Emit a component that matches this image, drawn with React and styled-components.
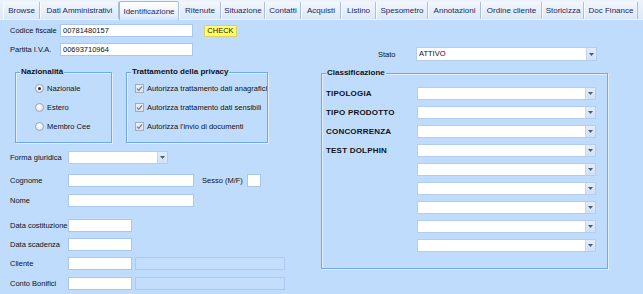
import { createGlobalStyle, styled } from "styled-components";

const tabs = [
  ["Browse", 37],
  ["Dati Amministrativi", 79],
  ["Identificazione", 60, true],
  ["Ritenute", 42],
  ["Situazione", 44],
  ["Contatti", 36],
  ["Acquisti", 40],
  ["Listino", 35],
  ["Spesometro", 52],
  ["Annotazioni", 53],
  ["Ordine cliente", 61],
  ["Storicizza", 42],
  ["Doc Finance", 54],
];

const classi = ["TIPOLOGIA", "TIPO PRODOTTO", "CONCORRENZA", "TEST DOLPHIN", "", "", "", "", ""];

function Arrow() {
  return (
    <ArrowBtn>
      <svg width="5" height="3" viewBox="0 0 5 3">
        <polygon points="0,0 5,0 2.5,3" fill="#4a5b7c" />
      </svg>
    </ArrowBtn>
  );
}

function Combo({ w, h = 13, value }) {
  return (
    <ComboBox $w={w} $h={h}>
      <ComboText>{value}</ComboText>
      <Arrow />
    </ComboBox>
  );
}

export default function App() {
  return (
    <>
      <GlobalStyle />
      <Window>
        <TabBar>
          {tabs.map(([name, w, active]) => (
            <Tab key={name} $w={w} $active={active}>
              {name}
            </Tab>
          ))}
        </TabBar>
        <Panel>
          <LeftCol>
            <Row $mt={4}>
              <Label $w={50}>Codice fiscale</Label>
              <TextBox $w={133} defaultValue="00781480157" />
              <CheckButton type="button">CHECK</CheckButton>
            </Row>
            <Row $mt={6}>
              <Label $w={50}>Partita I.V.A.</Label>
              <TextBox $w={133} defaultValue="00693710964" />
            </Row>
            <GroupRow>
              <Group $w={97} $h={71}>
                <GroupTitle>Nazionalità</GroupTitle>
                <Options $pl={19}>
                  <Option>
                    <Radio $checked />
                    Nazionale
                  </Option>
                  <Option>
                    <Radio />
                    Estero
                  </Option>
                  <Option>
                    <Radio />
                    Membro Cee
                  </Option>
                </Options>
              </Group>
              <Group $w={142} $h={71}>
                <GroupTitle>Trattamento della privacy</GroupTitle>
                <Options $pl={8}>
                  {[
                    "Autorizza trattamento dati anagrafici",
                    "Autorizza trattamento dati sensibili",
                    "Autorizza l'invio di documenti",
                  ].map((t) => (
                    <Option key={t}>
                      <Check>
                        <svg width="7" height="7" viewBox="0 0 7 7">
                          <path d="M1 3.6 L2.8 5.4 L6 1.4" fill="none" stroke="#6b7d9c" strokeWidth="1.3" />
                        </svg>
                      </Check>
                      {t}
                    </Option>
                  ))}
                </Options>
              </Group>
            </GroupRow>
            <Row $mt={8}>
              <Label $w={58}>Forma giuridica</Label>
              <Combo w={100} />
            </Row>
            <Row $mt={10}>
              <Label $w={58}>Cognome</Label>
              <TextBox $w={126} />
              <Label $w={45} $ml={8}>
                Sesso (M/F)
              </Label>
              <TextBox $w={14} />
            </Row>
            <Row $mt={7}>
              <Label $w={58}>Nome</Label>
              <TextBox $w={126} />
            </Row>
            <Row $mt={12}>
              <Label $w={58}>Data costituzione</Label>
              <TextBox $w={64} />
            </Row>
            <Row $mt={6}>
              <Label $w={58}>Data scadenza</Label>
              <TextBox $w={64} />
            </Row>
            <Row $mt={6}>
              <Label $w={58}>Cliente</Label>
              <TextBox $w={64} />
              <TextBox $w={150} $ml={3} disabled />
            </Row>
            <Row $mt={7}>
              <Label $w={58}>Conto Bonifici</Label>
              <TextBox $w={64} />
              <TextBox $w={150} $ml={3} disabled />
            </Row>
          </LeftCol>
          <RightCol>
            <Row $mt={27} $ml={57} $h={14}>
              <Label $w={38}>Stato</Label>
              <Combo w={181} h={14} value="ATTIVO" />
            </Row>
            <Group $w={287} $h={196} $mt={12}>
              <GroupTitle>Classificazione</GroupTitle>
              <ClassList>
                {classi.map((c, i) => (
                  <Row key={i}>
                    <ClassLabel>{c}</ClassLabel>
                    <Combo w={179} />
                  </Row>
                ))}
              </ClassList>
            </Group>
          </RightCol>
        </Panel>
      </Window>
    </>
  );
}

const GlobalStyle = createGlobalStyle`
  body {
    margin: 0;
    background: #c0dcfd;
    font-family: "Liberation Sans", Arial, sans-serif;
    color: #111111;
  }
`;

const Window = styled.div`
  width: 643px;
  height: 294px;
  display: flex;
  flex-direction: column;
  overflow: hidden;
`;

const TabBar = styled.div`
  height: 20px;
  display: flex;
  align-items: flex-end;
  padding-left: 3px;
  background: linear-gradient(#edf3fc, #dde9f9);
  border-bottom: 1px solid #e9f2fe;
  box-sizing: border-box;
`;

const Tab = styled.div`
  width: ${(p) => p.$w}px;
  height: ${(p) => (p.$active ? 19 : 17)}px;
  margin-bottom: ${(p) => (p.$active ? -1 : 0)}px;
  box-sizing: border-box;
  display: flex;
  align-items: center;
  justify-content: center;
  font-size: 8px;
  color: #1a285a;
  white-space: nowrap;
  background: ${(p) =>
    p.$active ? "linear-gradient(#ffffff, #eaf3fe 60%, #d0e5fd)" : "linear-gradient(#f3f7fd, #dae7f9)"};
  border-left: 1px solid ${(p) => (p.$active ? "#9ab7de" : "#f7faff")};
  border-right: 1px solid #a9c0de;
  border-top: ${(p) => (p.$active ? "1px solid #9ab7de" : "none")};
  border-radius: ${(p) => (p.$active ? "2px 2px 0 0" : "0")};
  position: relative;
  z-index: ${(p) => (p.$active ? 1 : 0)};
`;

const Panel = styled.div`
  flex: 1;
  display: flex;
  background: #c0dcfd;
`;

const LeftCol = styled.div`
  width: 321px;
  padding-left: 10px;
  box-sizing: border-box;
  display: flex;
  flex-direction: column;
`;

const RightCol = styled.div`
  flex: 1;
  display: flex;
  flex-direction: column;
`;

const Row = styled.div`
  display: flex;
  align-items: center;
  height: ${(p) => p.$h || 13}px;
  margin-top: ${(p) => p.$mt || 0}px;
  margin-left: ${(p) => p.$ml || 0}px;
`;

const Label = styled.span`
  width: ${(p) => p.$w}px;
  margin-left: ${(p) => p.$ml || 0}px;
  flex-shrink: 0;
  font-size: 7.5px;
  white-space: nowrap;
`;

const TextBox = styled.input`
  width: ${(p) => p.$w}px;
  height: 13px;
  margin: 0 0 0 ${(p) => p.$ml || 0}px;
  box-sizing: border-box;
  border: 1px solid #a9c7ec;
  background: #ffffff;
  padding: 0 2px;
  font-family: "Liberation Sans", Arial, sans-serif;
  font-size: 7.5px;
  color: #111111;
  outline: none;
  &:disabled {
    background: #c3ddfc;
    border-color: #adcaee;
  }
`;

const CheckButton = styled.button`
  width: 33px;
  height: 12px;
  margin-left: 11px;
  padding: 0;
  border: 1px solid #d7d27a;
  background: linear-gradient(#ffff7a, #ffff4a);
  font-family: "Liberation Sans", Arial, sans-serif;
  font-size: 7.5px;
  color: #222;
`;

const ComboBox = styled.div`
  width: ${(p) => p.$w}px;
  height: ${(p) => p.$h}px;
  box-sizing: border-box;
  border: 1px solid #b3cdef;
  background: #ffffff;
  display: flex;
`;

const ComboText = styled.span`
  flex: 1;
  padding-left: 2px;
  font-size: 7.5px;
  line-height: 11px;
`;

const ArrowBtn = styled.span`
  width: 9px;
  display: flex;
  align-items: center;
  justify-content: center;
  background: linear-gradient(#e2edfb, #cfe1f8);
  border-left: 1px solid #c3d7f2;
`;

const GroupRow = styled.div`
  display: flex;
  gap: 14px;
  margin: 16px 0 0 5px;
`;

const Group = styled.div`
  position: relative;
  width: ${(p) => p.$w}px;
  height: ${(p) => p.$h}px;
  margin-top: ${(p) => p.$mt || 0}px;
  box-sizing: border-box;
  border: 1px solid #6ea8f0;
  box-shadow: 1px 1px 0 #e3effe, inset 1px 1px 0 #e3effe;
`;

const GroupTitle = styled.span`
  position: absolute;
  top: -6px;
  left: 4px;
  padding: 0 1px;
  background: #c0dcfd;
  font-size: 8px;
  font-weight: bold;
  line-height: 10px;
  white-space: nowrap;
`;

const Options = styled.div`
  display: flex;
  flex-direction: column;
  padding: 6px 0 0 ${(p) => p.$pl}px;
`;

const Option = styled.div`
  height: 19px;
  display: flex;
  align-items: center;
  gap: 3px;
  font-size: 7.5px;
  white-space: nowrap;
`;

const Radio = styled.span`
  width: 9px;
  height: 9px;
  box-sizing: border-box;
  border-radius: 50%;
  border: 1px solid #9ba6b5;
  background: radial-gradient(circle at 40% 35%, #ffffff, #d7dde5);
  display: flex;
  align-items: center;
  justify-content: center;
  &::after {
    content: "";
    width: 3px;
    height: 3px;
    border-radius: 50%;
    background: ${(p) => (p.$checked ? "#2b2b2b" : "transparent")};
  }
`;

const Check = styled.span`
  width: 9px;
  height: 9px;
  box-sizing: border-box;
  border: 1px solid #a2adbc;
  background: linear-gradient(#eef1f5, #dde2e9);
  display: flex;
  align-items: center;
  justify-content: center;
`;

const ClassList = styled.div`
  display: flex;
  flex-direction: column;
  gap: 6px;
  padding: 13px 0 0 4px;
`;

const ClassLabel = styled.span`
  width: 91px;
  font-size: 8px;
  font-weight: bold;
  letter-spacing: 0.2px;
  white-space: nowrap;
`;
